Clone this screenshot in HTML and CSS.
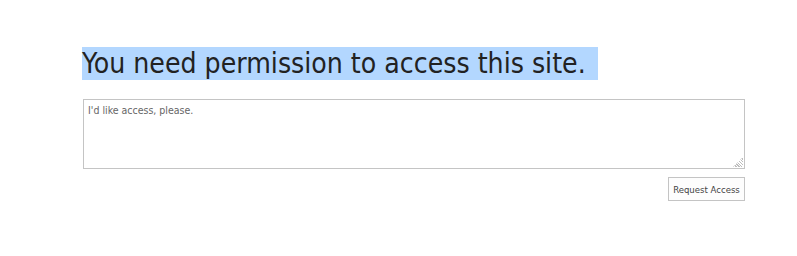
FILE: index.html
```html
<!DOCTYPE html>
<html lang="en">
<head>
  <meta charset="UTF-8">
  <title>Access required</title>
  <link rel="stylesheet" href="styles.css">
</head>
<body>
  <div class="container">
    <h1 class="title"><span class="selected">You need permission to access this site.</span></h1>

    <div class="box-wrap">
      <textarea id="requestBox" class="request-box">I'd like access, please.</textarea>
      <span class="grip"></span>
    </div>

    <div class="actions">
      <button id="requestBtn">Request Access</button>
    </div>
  </div>
</body>
</html>
```

FILE: styles.css
```css
body {
  margin: 0;
  background-color: #ffffff;
  font-family: "DejaVu Sans Condensed", "DejaVu Sans", sans-serif;
  color: #262626;
}

.container {
  width: 662px;
  padding: 47px 0 0 83px;
}

.title {
  margin: 0 0 19px 0;
  font-size: 28.15px;
  font-weight: normal;
  line-height: 33px;
  color: #222;
}

.selected {
  display: inline-block;
  background-color: #b3d7ff;
  padding: 0 12px 0 0;
  margin-left: -1px;
}

.box-wrap {
  position: relative;
}

.request-box {
  display: block;
  box-sizing: border-box;
  width: 662px;
  height: 70px;
  margin: 0;
  padding: 4px 4px;
  border: 1px solid #c4c4c4;
  font-family: "DejaVu Sans Condensed", "DejaVu Sans", sans-serif;
  font-size: 10.5px;
  color: #666;
  resize: none;
  outline: none;
}

/* resize handle drawn over the corner */
.grip {
  position: absolute;
  right: 2px;
  bottom: 2px;
  width: 10px;
  height: 10px;
  background: repeating-linear-gradient(45deg, #bdbdbd 0 1px, #ffffff 1px 2px);
  clip-path: polygon(100% 0, 100% 100%, 0 100%);
}

.actions {
  display: flex;
  justify-content: flex-end;
  margin-top: 8px;
}

#requestBtn {
  box-sizing: border-box;
  width: 77px;
  height: 24px;
  padding: 0;
  border: 1px solid #c4c4c4;
  background-color: #fdfdfd;
  font-family: "DejaVu Sans Condensed", "DejaVu Sans", sans-serif;
  font-size: 9.5px;
  white-space: nowrap;
  color: #444;
  cursor: pointer;
}
```
